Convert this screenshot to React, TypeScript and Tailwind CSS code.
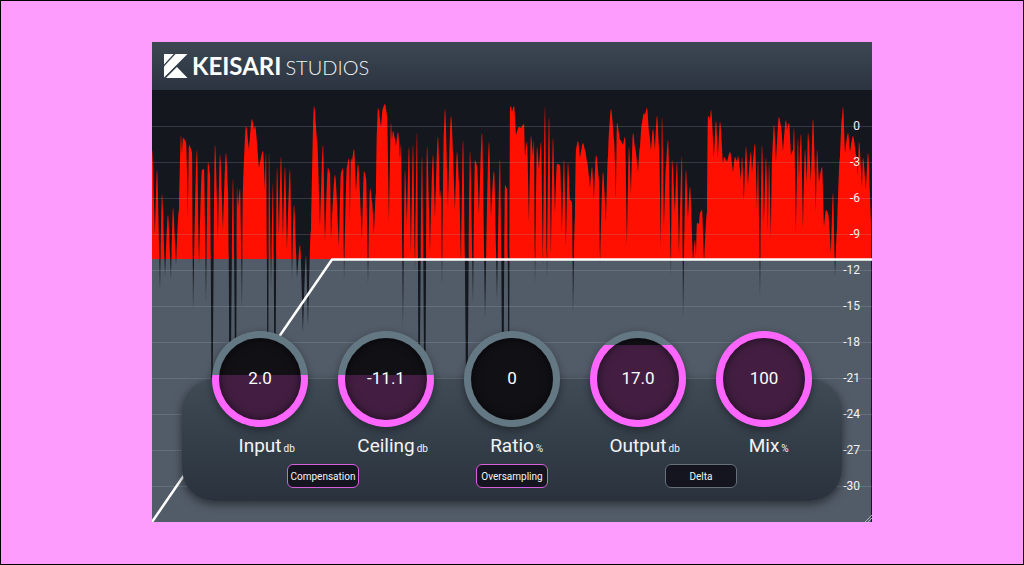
import React, { useState } from 'react';
import clsx from 'clsx';

type KnobSpec = {
  id: string;
  label: string;
  unit: string;
  value: string;
  fill: number; // 0..1, how much of the dial is lit from the bottom
};

const KNOBS: KnobSpec[] = [
  { id: 'input', label: 'Input', unit: 'db', value: '2.0', fill: 0.54 },
  { id: 'ceiling', label: 'Ceiling', unit: 'db', value: '-11.1', fill: 0.54 },
  { id: 'ratio', label: 'Ratio', unit: '%', value: '0', fill: 0 },
  { id: 'output', label: 'Output', unit: 'db', value: '17.0', fill: 0.85 },
  { id: 'mix', label: 'Mix', unit: '%', value: '100', fill: 1 },
];

const SCALE = [0, -3, -6, -9, -12, -15, -18, -21, -24, -27, -30];

const VIEW_W = 720;
const VIEW_H = 432;
const CEILING_Y = 169;

// Envelope of the signal, x,y pairs in view units
const ENVELOPE = `
0,60 3,147 5,80 8,202 10,104 13,187 16,125 19,190 21,118 24,175 27,120 29,45 30,64 31,48 34,52 36,127
37,55 40,62 41,222 45,60 47,175 50,80 52,79 54,215 56,72 58,85 60,400 63,55 66,150 68,65 71,140 74,63
76,100 78,400 81,89 84,400 85,97 86,117 88,99 90,222 91,97 94,36 97,60 100,29 102,40 103,36 107,78 111,61
113,100 114,63 116,400 117,63 119,200 121,93 123,400 125,78 127,147 129,67 131,150 133,77 135,160 138,80
140,190 142,115 145,188 148,155 151,243 154,166 156,235 159,140 162,16 165,50 168,137 171,55 173,152
176,78 178,83 179,150 183,85 187,157 189,83 191,78 192,190 195,77 197,68 198,133 199,68 200,72 202,59
204,101 206,74 210,150 212,81 214,88 216,195 218,98 220,112 222,145 224,103 225,40 226,18 229,37 231,18
233,14 235,25 237,133 239,33 240,50 241,41 244,56 246,42 248,70 249,54 251,240 253,80 255,135 257,57
259,165 261,55 263,182 265,43 267,400 270,66 273,400 275,56 278,163 281,65 283,128 286,47 288,110 289,100
290,198 292,40 293,19 296,117 299,26 303,121 305,62 307,93 309,175 311,50 315,400 318,61 321,214 323,70
325,76 327,125 330,43 333,230 337,52 339,127 342,81 345,210 348,69 351,400 353,95 355,99 357,400 358,18
359,16 360,22 362,16 364,45 367,37 369,38 372,34 373,67 375,52 377,133 379,46 381,66 382,50 383,197 385,57
387,80 389,52 391,178 393,17 395,190 397,27 399,165 401,48 403,125 405,74 408,75 410,143 412,70 414,158
416,73 418,110 420,112 421,225 423,127 424,60 426,51 428,68 431,53 433,60 435,72 438,98 440,77 442,110
444,65 447,90 448,175 451,82 454,133 456,67 457,43 459,19 462,50 464,110 465,33 468,50 471,55 473,47
475,157 477,57 479,105 481,43 483,58 486,82 488,57 490,33 492,23 493,25 495,18 497,43 499,60 501,39 503,60
505,26 507,57 509,165 510,27 512,140 514,77 516,50 519,187 520,70 523,123 525,72 527,165 530,67 531,230
534,80 536,130 538,97 541,173 543,150 544,167 545,133 547,134 548,123 550,120 552,173 555,123 556,26
558,30 559,20 562,68 564,31 566,68 568,32 571,74 572,67 575,72 578,62 581,82 583,67 585,72 586,66 589,90
590,67 592,111 594,57 596,95 599,62 600,83 603,54 605,120 606,70 608,208 610,55 612,135 614,68 616,142
617,73 619,150 620,73 622,35 624,72 627,27 629,37 631,62 634,30 635,40 637,33 639,65 641,60 642,38 644,143
646,48 647,90 649,44 651,140 653,60 655,93 656,43 659,92 661,29 664,123 665,60 667,92 670,77 672,137
674,120 676,123 679,163 681,103 683,187 685,140 688,67 690,28 691,17 693,63 696,43 698,62 701,46 704,65
706,87 707,52 710,97 711,68 714,100 716,63 719,133
`
  .trim()
  .split(/\s+/)
  .map((pair) => pair.split(',').map(Number));

// Slightly rounded at the peaks, pointed in the dips
const envelopePath = () => {
  let d = `M0 ${VIEW_H} L0 ${ENVELOPE[0][1]}`;
  for (let i = 1; i < ENVELOPE.length; i++) {
    const [x0, y0] = ENVELOPE[i - 1];
    const [x1, y1] = ENVELOPE[i];
    const dx = x1 - x0;
    const dy = y1 - y0;
    if (dy > 0) {
      d += ` C${x0 + dx * 0.25} ${y0} ${x1 - dx * 0.5} ${y0 + dy * 0.4} ${x1} ${y1}`;
    } else {
      d += ` C${x0 + dx * 0.5} ${y1 - dy * 0.4} ${x1 - dx * 0.25} ${y1} ${x1} ${y1}`;
    }
  }
  return `${d} V${VIEW_H} Z`;
};

const Logo: React.FC = () => (
  <div className="flex items-center gap-1 text-white">
    <svg viewBox="0 0 25 25" className="size-6" fill="currentColor" aria-hidden="true">
      <path d="M0 0H10L0 11Z" />
      <path d="M12 0H24.500L0 24.500V13Z" />
      <path d="M13.500 13.500L24.500 25H2Z" />
    </svg>
    <div className="flex items-baseline gap-1 font-['Lato',sans-serif] leading-none">
      <span className="text-2xl leading-none font-bold">KEISARI</span>
      <span className="text-xl leading-none font-light text-gray-100">STUDIOS</span>
    </div>
  </div>
);

const Waveform: React.FC = () => (
  <svg
    viewBox={`0 0 ${VIEW_W} ${VIEW_H}`}
    preserveAspectRatio="none"
    className="absolute inset-0 h-full w-full"
    role="img"
    aria-label="Clipped waveform"
  >
    <defs>
      <linearGradient id="signal" gradientUnits="userSpaceOnUse" x1="0" y1="0" x2="0" y2={VIEW_H}>
        <stop offset={CEILING_Y / VIEW_H} stopColor="#ff1000" />
        <stop offset={CEILING_Y / VIEW_H} stopColor="#525c68" />
        <stop offset="1" stopColor="#525c68" />
      </linearGradient>
    </defs>
    <path d={envelopePath()} fill="url(#signal)" />
    {SCALE.map((db, i) => (
      <line key={db} x1="0" x2={VIEW_W} y1={36 * (i + 1) + 0.5} y2={36 * (i + 1) + 0.5} stroke="#9fb4c0" strokeOpacity="0.22" />
    ))}
    <polyline points="0,432 180,169.500 720,169.500" fill="none" stroke="#fff" strokeWidth="2.500" />
  </svg>
);

const Knob: React.FC<{ knob: KnobSpec }> = ({ knob }) => {
  // The face is 82px inside a 96px ring, so its level needs its own percentage
  const ring = knob.fill * 100;
  const face = Math.min(100, Math.max(0, ((knob.fill * 96 - 7) / 82) * 100));

  return (
    <div className="flex flex-col items-center">
      <div
        className="relative size-24 rounded-full p-[7px] shadow-[0_3px_8px_rgba(0,0,0,0.4)]"
        style={{ background: `linear-gradient(to top, #ff66ff ${ring}%, #647883 ${ring}%)` }}
      >
        <div
          className="flex size-full items-center justify-center rounded-full shadow-[inset_0_0_10px_rgba(0,0,0,0.6)]"
          style={{ background: `linear-gradient(to top, #431e42 ${face}%, #101015 ${face}%)` }}
        >
          <output htmlFor={knob.id} className="text-[17px] text-white">{knob.value}</output>
        </div>
        <input
          id={knob.id}
          type="range"
          min="0"
          max="100"
          defaultValue={knob.fill * 100}
          className="absolute inset-0 size-full cursor-pointer opacity-0"
        />
      </div>
      {/* The unit hangs off the name, which stays centred under the dial */}
      <label htmlFor={knob.id} className="relative mt-[7px] text-[19px] leading-6 text-gray-100">
        {knob.label}
        <span className="absolute bottom-px left-full pl-0.5 text-[10px] leading-4">{knob.unit}</span>
      </label>
    </div>
  );
};

const Toggle: React.FC<{ label: string; initial?: boolean }> = ({ label, initial = false }) => {
  const [on, setOn] = useState(initial);
  return (
    <button
      type="button"
      aria-pressed={on}
      onClick={() => setOn(!on)}
      className={clsx(
        'h-6 w-[72px] rounded-md border bg-[#14151e] text-[10px] text-gray-100',
        on ? 'border-[#d65fdc]' : 'border-[#66717c]',
      )}
    >
      {label}
    </button>
  );
};

const App: React.FC = () => {
  return (
    <main className="flex min-h-screen items-center justify-center border border-black bg-[#fe9cfd] pb-px font-['Roboto',sans-serif]">
      <div className="w-full max-w-[720px] bg-[#14171d]">
        <header className="flex h-12 items-center bg-linear-to-b from-[#3d4853] to-[#2b3440] px-3">
          <Logo />
        </header>

        <section className="relative px-[30px] pt-[289px] pb-[21px]">
          <Waveform />

          {/* dB scale */}
          <ul className="absolute top-[18px] right-3 text-right text-xs text-gray-100">
            {SCALE.map((db) => (
              <li key={db} className="h-9 leading-9">{db}</li>
            ))}
          </ul>

          {/* Controls */}
          <div className="relative flow-root rounded-[32px] bg-linear-to-b from-[#404b56] to-[#29323d] px-[15px] pb-[13px] shadow-[0_3px_10px_rgba(0,0,0,0.5)]">
            <div className="-mt-12 grid grid-cols-5">
              {KNOBS.map((knob) => (
                <Knob key={knob.id} knob={knob} />
              ))}
            </div>
            <div className="mt-1.5 grid grid-cols-[2fr_1fr_2fr] justify-items-center">
              <Toggle label="Compensation" initial />
              <Toggle label="Oversampling" initial />
              <Toggle label="Delta" />
            </div>
          </div>

          {/* Resize grip */}
          <svg viewBox="0 0 8 8" className="absolute right-0 bottom-0 size-2" stroke="#aab2ba" aria-hidden="true">
            <path d="M1 8L8 1M4 8L8 4" />
          </svg>
        </section>
      </div>
    </main>
  );
};

export default App;
